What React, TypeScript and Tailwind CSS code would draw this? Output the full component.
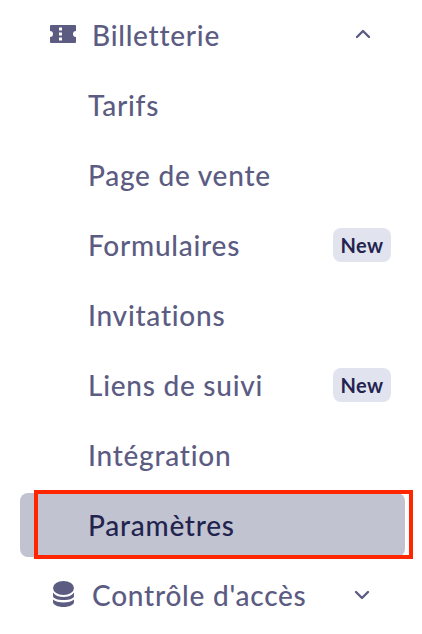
const sub = [
  { label: "Tarifs" },
  { label: "Page de vente" },
  { label: "Formulaires", badge: true },
  { label: "Invitations" },
  { label: "Liens de suivi", badge: true },
  { label: "Intégration" },
];

function Ticket() {
  return (
    <svg width="26" height="18" viewBox="0 0 26 18" className="shrink-0 mb-[2px]">
      <path
        fillRule="evenodd"
        fill="#5c5c83"
        d="M1 0h24a1 1 0 0 1 1 1v5a3 3 0 0 0 0 6v5a1 1 0 0 1-1 1H1a1 1 0 0 1-1-1v-5a3 3 0 0 0 0-6V1a1 1 0 0 1 1-1zM9 2.500v3h3v-3zm0 5v3h3v-3zm0 5v3h3v-3z"
      />
    </svg>
  );
}

function Database() {
  return (
    <svg width="21" height="26" viewBox="0 0 21 26" className="shrink-0 mb-[2px]">
      <ellipse cx="10.500" cy="7" rx="10.500" ry="7" fill="#5c5c83" />
      <path fill="#5c5c83" d="M0 11.500C2 14.500 6 16 10.500 16s8.500-1.500 10.500-4.500V15c0 2.500-4.700 4-10.500 4S0 17.500 0 15z" />
      <path fill="#5c5c83" d="M0 18.500C2 20.500 6 21.500 10.500 21.500s8.500-1 10.500-3V21c0 2.800-4.700 5-10.500 5S0 23.800 0 21z" />
    </svg>
  );
}

function Chevron({ up }: { up?: boolean }) {
  return (
    <svg width="16" height="10" viewBox="0 0 16 10" fill="none" stroke="#5c5c83" strokeWidth="2.400" strokeLinecap="round" strokeLinejoin="round" className={up ? "mb-[2px]" : ""}>
      <path d={up ? "M2 8l6-6 6 6" : "M2 2l6 6 6-6"} />
    </svg>
  );
}

export default function App() {
  return (
    <div className="relative w-[422px] h-[634px] bg-white overflow-hidden pt-[3px] font-['Lato','Noto_Sans',sans-serif] text-[28px] tracking-[0.75px] font-medium text-[#5c5c83]">
      <div className="flex flex-col gap-[6px] ml-5 w-[385px]">
        <div className="h-16 flex items-center pl-[30px] pr-[34px]">
          <Ticket />
          <span className="ml-4 flex-1">Billetterie</span>
          <Chevron up />
        </div>
        {sub.map((s) => (
          <div key={s.label} className="h-16 flex items-center justify-between pl-[68px] pr-[14px]">
            <span>{s.label}</span>
            {s.badge && (
              <span className="w-[58px] h-[34px] flex items-center justify-center rounded-lg bg-[#e1e4ee] text-[#23234f] text-[20px] tracking-[0.5px] font-bold">
                New
              </span>
            )}
          </div>
        ))}
        <div className="h-16 flex items-center pl-[68px] rounded-lg bg-[#c1c3d1] text-[#23234f]">
          Paramètres
        </div>
        <div className="h-16 flex items-center pl-[33px] pr-[35px]">
          <Database />
          <span className="ml-[18px] flex-1">Contrôle d'accès</span>
          <Chevron />
        </div>
      </div>
      <div className="absolute left-[34px] top-[490px] w-[379px] h-[69px] border-4 border-[#ff2600]" />
    </div>
  );
}
